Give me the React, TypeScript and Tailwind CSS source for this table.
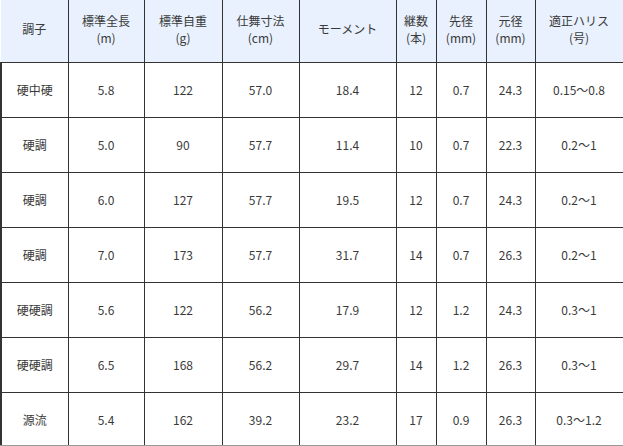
import * as React from "react"

const cols = [67, 76, 78, 77, 97, 40, 50, 49, 88]

const headers: [string, string?][] = [
    ["調子"],
    ["標準全長", "(m)"],
    ["標準自重", "(g)"],
    ["仕舞寸法", "(cm)"],
    ["モーメント"],
    ["継数", "(本)"],
    ["先径", "(mm)"],
    ["元径", "(mm)"],
    ["適正ハリス", "(号)"],
]

const rows: string[][] = [
    ["硬中硬", "5.8", "122", "57.0", "18.4", "12", "0.7", "24.3", "0.15〜0.8"],
    ["硬調", "5.0", "90", "57.7", "11.4", "10", "0.7", "22.3", "0.2〜1"],
    ["硬調", "6.0", "127", "57.7", "19.5", "12", "0.7", "24.3", "0.2〜1"],
    ["硬調", "7.0", "173", "57.7", "31.7", "14", "0.7", "26.3", "0.2〜1"],
    ["硬硬調", "5.6", "122", "56.2", "17.9", "12", "1.2", "24.3", "0.3〜1"],
    ["硬硬調", "6.5", "168", "56.2", "29.7", "14", "1.2", "26.3", "0.3〜1"],
    ["源流", "5.4", "162", "39.2", "23.2", "17", "0.9", "26.3", "0.3〜1.2"],
]

export default function App() {
    return (
        <div className="w-[623px] h-[446px] overflow-hidden bg-white border-b border-[#999] font-['Noto_Sans_CJK_JP','Noto_Sans',sans-serif] text-[12px] text-[#3a3a3a]">
            <table className="table-fixed border-collapse w-[623px]">
                <colgroup>
                    {cols.map((w, i) => (
                        <col key={i} style={{ width: w }} />
                    ))}
                </colgroup>
                <thead>
                    <tr className="h-[62px] bg-[#e8f1fd]">
                        {headers.map(([a, b], i) => (
                            <th
                                key={i}
                                className={
                                    "font-normal text-center align-middle leading-[17px] pb-[4px] border-b border-r border-[#333] " +
                                    (i === headers.length - 1 ? "border-r-[#ccd6e3]" : "")
                                }
                            >
                                <div>{a}</div>
                                {b && <div>{b}</div>}
                            </th>
                        ))}
                    </tr>
                </thead>
                <tbody>
                    {rows.map((r, ri) => (
                        <tr key={ri} className="h-[55px]">
                            {r.map((c, ci) => (
                                <td
                                    key={ci}
                                    className={
                                        "text-center align-middle border border-[#333] " +
                                        (ci === 0 ? "border-l-2" : "")
                                    }
                                >
                                    {c}
                                </td>
                            ))}
                        </tr>
                    ))}
                </tbody>
            </table>
        </div>
    )
}
